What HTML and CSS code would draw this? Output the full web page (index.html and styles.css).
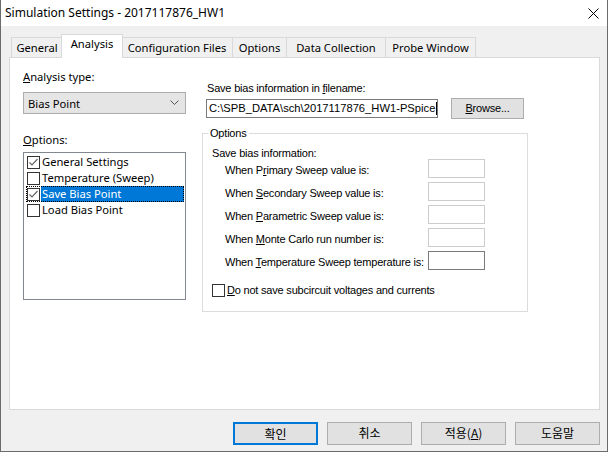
FILE: index.html
```html
<!DOCTYPE html>
<html>
<head>
<meta charset="utf-8">
<link rel="stylesheet" href="styles.css">
</head>
<body>
<div class="window">
  <div class="titlebar">
    <span class="title">Simulation Settings - 2017117876_HW1</span>
    <svg class="close" width="11" height="11" viewBox="0 0 11 11"><path d="M0.5 0.5 L10.5 10.5 M10.5 0.5 L0.5 10.5" stroke="#000" stroke-width="1" fill="none"/></svg>
  </div>
  <div class="body">
    <div class="tabs">
      <div class="tab tab-general">General</div>
      <div class="tab tab-active">Analysis</div>
      <div class="tab tab-config">Configuration Files</div>
      <div class="tab tab-options">Options</div>
      <div class="tab tab-data">Data Collection</div>
      <div class="tab tab-probe">Probe Window</div>
    </div>
    <div class="panel">
      <div class="leftcol">
        <div class="label"><u>A</u>nalysis type:</div>
        <div class="combo"><span>Bias Point</span>
          <svg width="9" height="6" viewBox="0 0 9 6"><path d="M0.5 0.5 L4.5 4.5 L8.5 0.5" stroke="#555" stroke-width="1" fill="none"/></svg>
        </div>
        <div class="label label-options"><u>O</u>ptions:</div>
        <div class="listbox">
          <div class="item"><span class="cb"><svg width="13" height="13" viewBox="0 0 13 13"><rect x="0.5" y="0.5" width="12" height="12" fill="#fff" stroke="#333"/><path d="M2.5 6.5 L5 9 L10.5 3" stroke="#666" stroke-width="1.2" fill="none"/></svg></span><span class="itext">General Settings</span></div>
          <div class="item"><span class="cb"><svg width="13" height="13" viewBox="0 0 13 13"><rect x="0.5" y="0.5" width="12" height="12" fill="#fff" stroke="#333"/></svg></span><span class="itext">Temperature (Sweep)</span></div>
          <div class="item item-sel"><span class="cb"><svg width="13" height="13" viewBox="0 0 13 13"><rect x="0.5" y="0.5" width="12" height="12" fill="#fff" stroke="#333"/><path d="M2.5 6.5 L5 9 L10.5 3" stroke="#666" stroke-width="1.2" fill="none"/></svg></span><span class="itext">Save Bias Point</span></div>
          <div class="item"><span class="cb"><svg width="13" height="13" viewBox="0 0 13 13"><rect x="0.5" y="0.5" width="12" height="12" fill="#fff" stroke="#333"/></svg></span><span class="itext">Load Bias Point</span></div>
        </div>
      </div>
      <div class="rightcol">
        <div class="flabel">Save bias information in <u>f</u>ilename:</div>
        <div class="filerow">
          <div class="fileinput"><span class="ftext">C:\SPB_DATA\sch\2017117876_HW1-PSpice</span><span class="caret"></span></div>
          <div class="btn browse"><u>B</u>rowse...</div>
        </div>
        <fieldset class="group">
          <legend>Options</legend>
          <div class="glabel">Save bias information:</div>
          <div class="vrow"><span class="vlabel">When P<u>r</u>imary Sweep value is:</span><span class="vbox"></span></div>
          <div class="vrow"><span class="vlabel">When <u>S</u>econdary Sweep value is:</span><span class="vbox"></span></div>
          <div class="vrow"><span class="vlabel">When <u>P</u>arametric Sweep value is:</span><span class="vbox"></span></div>
          <div class="vrow"><span class="vlabel">When <u>M</u>onte Carlo run number is:</span><span class="vbox"></span></div>
          <div class="vrow"><span class="vlabel">When <u>T</u>emperature Sweep temperature is:</span><span class="vbox vbox-on"></span></div>
          <div class="chkrow"><span class="cb2"></span><span><u>D</u>o not save subcircuit voltages and currents</span></div>
        </fieldset>
      </div>
    </div>
    <div class="buttons">
      <div class="btn kbtn kbtn-default">확인</div>
      <div class="btn kbtn">취소</div>
      <div class="btn kbtn">적용(<u>A</u>)</div>
      <div class="btn kbtn">도움말</div>
    </div>
  </div>
</div>
</body>
</html>
```
FILE: styles.css
```css
* { box-sizing: border-box; }
html, body { margin: 0; padding: 0; background: #fff; }
body {
  width: 609px; height: 453px; overflow: hidden;
  font-family: "Noto Sans", "Noto Sans CJK KR", sans-serif;
  font-size: 11.2px; color: #000;
}
.window {
  width: 608px; height: 452px;
  border: 1px solid #6b6b6b; border-top: 0;
  background: #f0f0f0;
  display: flex; flex-direction: column;
}
.titlebar {
  height: 26px; background: #fff;
  display: flex; align-items: center; justify-content: space-between;
  padding: 0 8px 0 4px;
}
.title { font-size: 12px; line-height: 16px; }
.close { display: block; }
.body { flex: 1; padding: 8px 7px 0 8px; display: flex; flex-direction: column; }

.tabs {
  display: flex; align-items: flex-end;
  height: 24px; margin-bottom: -1px; padding-left: 2px;
  position: relative; z-index: 1;
}
.tab {
  height: 20px; margin-bottom: 1px;
  border: 1px solid #d9d9d9; border-bottom: 0;
  background: #f0f0f0;
  margin-left: -1px;
  line-height: 19px; text-align: center;
  white-space: nowrap;
}
.tab-general { width: 52px; margin-left: 0; }
.tab-active {
  height: 24px; margin-bottom: 0;
  background: #fff; width: 62px;
  margin-left: -2px; margin-right: -1px;
  line-height: 18px;
  position: relative; z-index: 2;
}
.tab-config { width: 112px; }
.tab-options { width: 55px; }
.tab-data { width: 100px; }
.tab-probe { width: 91px; }

.panel {
  height: 353px; background: #fff;
  border: 1px solid #d9d9d9;
  display: grid; grid-template-columns: 163px 1fr;
  column-gap: 16px;
  padding: 11px 0 0 13px;
}
.leftcol { display: flex; flex-direction: column; }
.label { line-height: 16px; }
.combo {
  margin-top: 7px; height: 22px;
  border: 1px solid #adadad; background: #e5e5e5;
  display: flex; align-items: center; justify-content: space-between;
  padding: 0 6px 0 4px;
}
.label-options { margin-top: 18px; }
.listbox {
  margin-top: 4px; height: 148px;
  border: 1px solid #828790; background: #fff;
  padding: 1px 1px 0 2px;
}
.item { height: 16px; display: flex; align-items: center; line-height: 16px; }
.cb { width: 15px; height: 16px; padding: 1px 0 0 1px; display: flex; align-items: center; }
.cb svg { display: block; }
.itext { padding-left: 1px; flex: 1; height: 16px; white-space: nowrap; }
.item-sel { outline: 1px dotted #000; outline-offset: -1px; }
.item-sel .itext { background: #0078d7; color: #fff; }

.rightcol {
  display: flex; flex-direction: column;
  font-family: "Liberation Sans", Arial, sans-serif; font-size: 11px;
  letter-spacing: -0.2px;
  padding-top: 13px;
}
.flabel { line-height: 13px; padding-left: 5px; }
.filerow { display: flex; align-items: center; margin-top: 3px; padding-left: 4px; }
.fileinput {
  width: 232px; height: 19px;
  border: 1px solid #7a7a7a; background: #fff;
  line-height: 17px; padding-left: 2px;
  font-size: 11.2px; letter-spacing: 0;
  display: flex; align-items: center;
  overflow: hidden; white-space: nowrap;
}
.ftext { flex: none; }
.caret { flex: none; width: 1px; height: 13px; background: #000; margin-left: 1px; }
.btn {
  border: 1px solid #adadad; background: #e1e1e1;
  text-align: center;
}
.browse { width: 73px; height: 21px; margin-left: 13px; line-height: 19px; }
.group {
  margin: 8px 0 0 0; width: 326px; height: 185px;
  border: 1px solid #dcdcdc;
  padding: 7px 0 0 9px;
  min-width: 0;
}
.group legend { padding: 0 2px; margin-left: -4px; line-height: 13px; }
.glabel { line-height: 12px; }
.vrow { display: grid; grid-template-columns: 216px 57px; height: 19px; margin-bottom: 4px; }
.vlabel { padding-left: 13px; padding-top: 3px; line-height: 16px; white-space: nowrap; }
.vbox { border: 1px solid #cccccc; background: #fff; }
.vbox-on { border-color: #7a7a7a; }
.chkrow { display: flex; align-items: center; margin-top: 13px; line-height: 14px; }
.cb2 { width: 13px; height: 13px; border: 1px solid #333; background: #fff; margin-right: 2px; }

.buttons {
  display: flex; justify-content: flex-end; gap: 9px;
  margin-top: 12px;
}
.kbtn {
  width: 85px; height: 23px;
  font-family: "Noto Sans CJK KR", sans-serif; font-size: 12px;
  line-height: 20px;
}
.kbtn-default { border: 2px solid #0078d7; line-height: 19px; }
```
